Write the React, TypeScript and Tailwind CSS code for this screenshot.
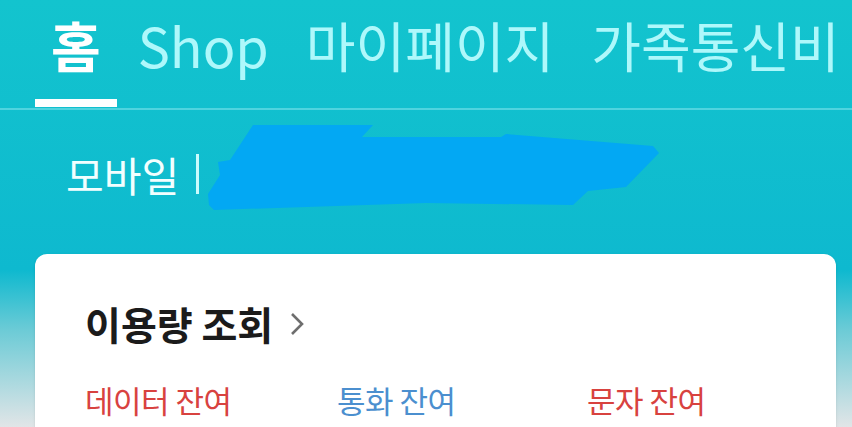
import React from 'react';

const tabs = ['홈', 'Shop', '마이페이지', '가족통신비'];

const App: React.FC = () => {
  return (
    <div className="w-[852px] h-[427px] overflow-hidden bg-[linear-gradient(180deg,#13c4ce_0px,#0eb9cf_270px,#6ccbd6_330px,#e1e5e7_427px)] font-['Noto_Sans_CJK_KR',sans-serif]">
      {/* top tabs */}
      <nav className="flex gap-[5px] h-[108px] pl-[35px]">
        {tabs.map((t, i) => (
          <div key={t} className="flex flex-col justify-between px-[16px]">
            <span
              className={
                'pt-[18px] text-[54px] leading-[54px] whitespace-nowrap ' +
                (i === 0 ? 'font-bold text-white' : 'text-[#aef8fb]')
              }
            >
              {t}
            </span>
            {i === 0 ? <div className="h-[8px] mb-[1px] -mx-[16px] bg-white" /> : <div className="h-[8px]" />}
          </div>
        ))}
      </nav>
      <div className="h-[2px] bg-[#4fd4df]" />

      {/* line info */}
      <div className="relative h-[144px]">
        <div className="flex items-center pt-[43px] pl-[66px]">
          <span className="text-[41px] leading-[42px] text-[#f2ffff]">모바일</span>
          <span className="ml-[17px] w-[3px] h-[40px] bg-[#c9fbfd]" />
        </div>
        <svg className="absolute left-0 top-0" width="852" height="144" viewBox="0 0 852 144">
          <polygon
            fill="#03a8f3"
            points="253,15 373,15 362,27 501,27 506,24 653,36 659,43 626,77 588,81 573,95 426,93 214,100 209,95 208,84 220,65 218,52 230,50"
          />
        </svg>
      </div>

      {/* usage card */}
      <div className="ml-[35px] w-[801px] h-[200px] rounded-[12px] bg-white shadow-sm pl-[50px] pt-[50px]">
        <div className="flex items-center">
          <span className="text-[39px] leading-[39px] font-bold text-[#1b1b1b]">이용량 조회</span>
          <svg className="ml-[17px]" width="14" height="24" viewBox="0 0 14 24">
            <polyline points="2,2 12,12 2,22" fill="none" stroke="#6e6e6e" strokeWidth="2.6" />
          </svg>
        </div>
        <div className="flex mt-[41px] text-[31px] leading-[31px] tracking-[-0.5px]">
          <span className="w-[252px] text-[#d8423f]">데이터 잔여</span>
          <span className="w-[250px] text-[#4b8fcf]">통화 잔여</span>
          <span className="text-[#d8423f]">문자 잔여</span>
        </div>
      </div>
    </div>
  );
};

export default App;
